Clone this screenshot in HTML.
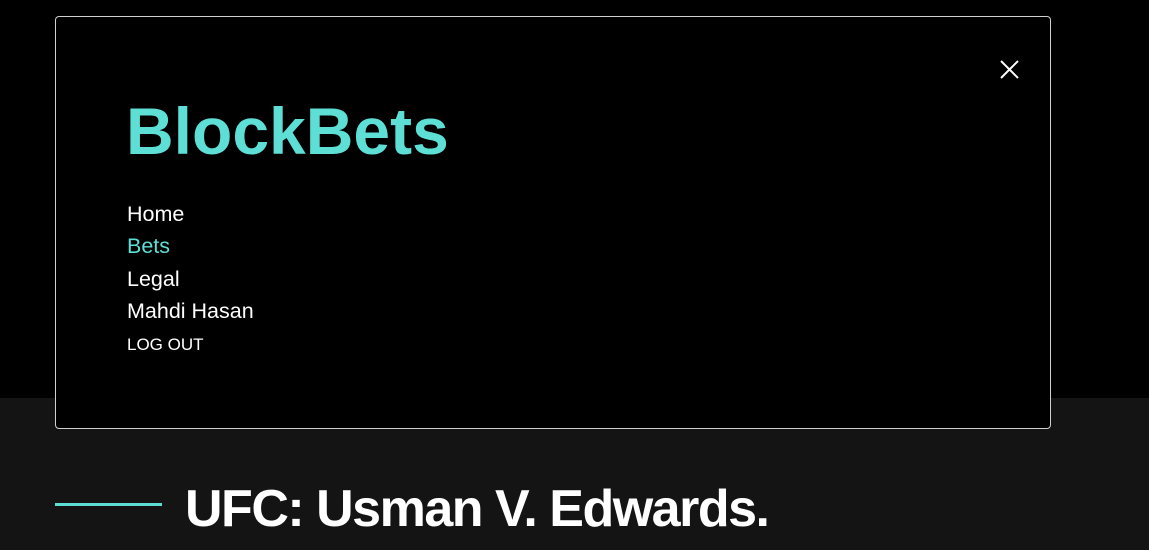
<!DOCTYPE html>
<html><head><meta charset="utf-8"><style>
html,body{margin:0;padding:0;width:1149px;height:550px;overflow:hidden;background:#141414;font-family:"Liberation Sans",sans-serif}
.top{position:absolute;left:0;top:0;width:1149px;height:398px;background:#000}
.modal{position:absolute;left:55px;top:16px;width:994px;height:411px;border:1px solid #d0d0d0;border-radius:4px;background:#000}
.logo{position:absolute;left:126px;top:93px;font-size:66px;font-weight:bold;color:#5ddfd6;line-height:76px}
.nav{position:absolute;left:127px;font-size:21.5px;color:#fff;line-height:24px}
.line{position:absolute;left:55px;top:503px;width:107px;height:3px;background:#5ddfd6}
.title{position:absolute;left:185px;top:478px;font-size:52px;font-weight:bold;color:#fff;line-height:62px;letter-spacing:-1.5px}
</style></head><body>
<div class="top"></div>
<div class="modal"></div>
<svg style="position:absolute;left:1000px;top:60px" width="19" height="19" viewBox="0 0 19 19"><path d="M1 1L18 18M18 1L1 18" stroke="#fff" stroke-width="2"/></svg>
<div class="logo">BlockBets</div>
<div class="nav" style="top:202px">Home</div>
<div class="nav" style="top:234px;color:#5ddfd6">Bets</div>
<div class="nav" style="top:267px">Legal</div>
<div class="nav" style="top:299px">Mahdi Hasan</div>
<div class="nav" style="top:333px;font-size:17px">LOG OUT</div>
<div class="line"></div>
<div class="title">UFC: Usman V. Edwards.</div>
</body></html>
